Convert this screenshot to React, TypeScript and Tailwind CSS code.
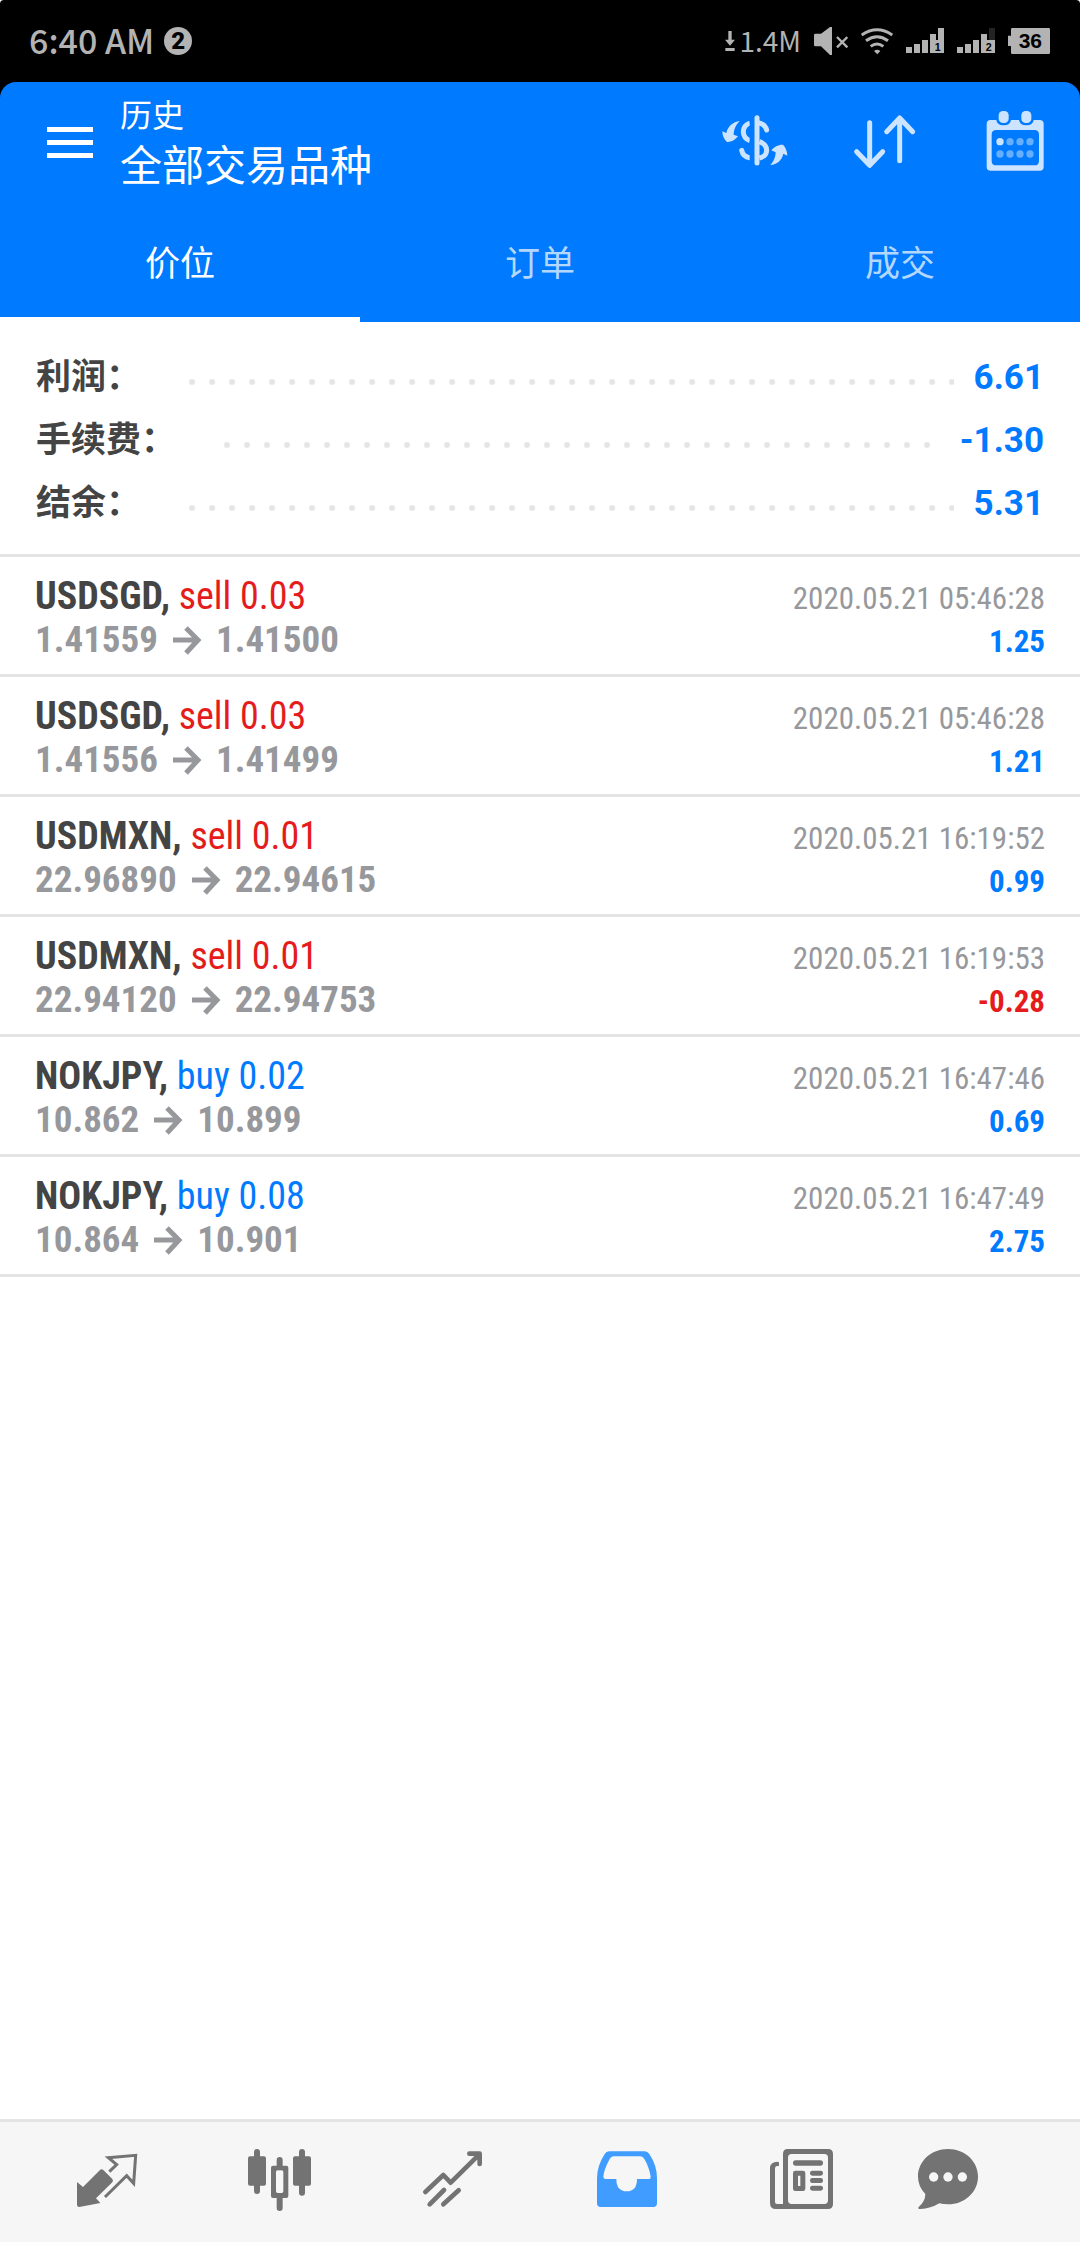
import type { ReactNode } from "react";

type Trade = {
  symbol: string;
  side: "buy" | "sell";
  volume: string;
  open: string;
  close: string;
  time: string;
  profit: string;
};

const trades: Trade[] = [
  { symbol: "USDSGD", side: "sell", volume: "0.03", open: "1.41559", close: "1.41500", time: "2020.05.21 05:46:28", profit: "1.25" },
  { symbol: "USDSGD", side: "sell", volume: "0.03", open: "1.41556", close: "1.41499", time: "2020.05.21 05:46:28", profit: "1.21" },
  { symbol: "USDMXN", side: "sell", volume: "0.01", open: "22.96890", close: "22.94615", time: "2020.05.21 16:19:52", profit: "0.99" },
  { symbol: "USDMXN", side: "sell", volume: "0.01", open: "22.94120", close: "22.94753", time: "2020.05.21 16:19:53", profit: "-0.28" },
  { symbol: "NOKJPY", side: "buy", volume: "0.02", open: "10.862", close: "10.899", time: "2020.05.21 16:47:46", profit: "0.69" },
  { symbol: "NOKJPY", side: "buy", volume: "0.08", open: "10.864", close: "10.901", time: "2020.05.21 16:47:49", profit: "2.75" },
];

const summary = [
  { label: "利润：", value: "6.61" },
  { label: "手续费：", value: "-1.30" },
  { label: "结余：", value: "5.31" },
];

const tabs = ["价位", "订单", "成交"];

function Signal({ digit, weak }: { digit: string; weak?: boolean }) {
  return (
    <svg className="h-7 w-[38px]" viewBox="678 81 114 84" fill="#b3b3b3" aria-hidden="true">
      <path d="M678 141h18v18h-18zM702 132h18v27h-18zM726 120h18v39h-18zM750 102h18v57h-18z" />
      <path d="M774 84h18v36h-18z" opacity={weak ? 0.2 : 1} />
      <path d="M764 120h28v39h-28z" />
      <text x="773" y="154" textAnchor="middle" className="fill-black font-['Liberation_Sans'] text-[32px] font-bold">
        {digit}
      </text>
    </svg>
  );
}

function StatusBar() {
  return (
    <div className="flex h-[82px] items-center justify-between rounded-t-sm bg-black pr-[30px] pl-[29px] font-['Noto_Sans_CJK_SC',sans-serif] text-[#b3b3b3]">
      <div className="flex items-center gap-[10px]">
        <span className="pb-[2px] text-[34px] leading-10 font-medium">6:40 AM</span>
        <span className="flex size-7 items-center justify-center rounded-full bg-[#b3b3b3] font-[Roboto,sans-serif] text-2xl leading-7 font-black text-black">
          2
        </span>
      </div>
      <div className="flex items-center gap-[13px]">
        <div className="flex items-center gap-1">
          <svg className="h-5 w-[10px]" viewBox="132 96 30 60" fill="#b3b3b3" aria-hidden="true">
            <path d="M142 96h10v26h10l-15 18-15-18h10zM133 147h28v9h-28z" />
          </svg>
          <span className="pb-[2px] text-[28px] leading-8">1.4M</span>
        </div>
        <svg className="h-7 w-[34px]" viewBox="399 81 102 84" aria-hidden="true">
          <path d="M399 105q0-4 4-4h17l27-20h6v84h-6l-27-26h-17q-4 0-4-4z" fill="#b3b3b3" />
          <path d="M468 111l31 31M499 111l-31 31" stroke="#b3b3b3" strokeWidth="7" fill="none" />
        </svg>
        <svg className="h-7 w-8" viewBox="541 81 96 84" fill="none" stroke="#b3b3b3" strokeWidth="9" aria-hidden="true">
          <path d="M543 105q46-31 92 0M556 122q33-24 66 0M570 139q19-14 38 0" />
          <path d="M580 153q9-7 19 0l-9 10z" fill="#b3b3b3" stroke="none" />
        </svg>
        <Signal digit="1" />
        <Signal digit="2" weak />
        <svg className="h-[26px] w-[42px]" viewBox="984 84 126 78" aria-hidden="true">
          <path d="M993 88q0-4 4-4h109q4 0 4 4v70q0 4-4 4h-109q-4 0-4-4v-20h-9v-31h9z" fill="#b3b3b3" />
          <text x="1051" y="144" textAnchor="middle" className="fill-black font-['Liberation_Sans'] text-[63px] font-bold">
            36
          </text>
        </svg>
      </div>
    </div>
  );
}

function HeaderButton({ label, viewBox, children }: { label: string; viewBox: string; children: ReactNode }) {
  return (
    <button type="button" aria-label={label} className="text-[#cce4ff]">
      <svg className="size-[66px]" viewBox={viewBox} fill="none" stroke="currentColor" strokeLinecap="round" strokeLinejoin="round">
        {children}
      </svg>
    </button>
  );
}

function Header() {
  return (
    <header className="bg-black">
      <div className="rounded-t-2xl bg-[#007aff] text-white">
        <div className="flex h-[120px] items-center pr-8 pl-[47px]">
          <button type="button" aria-label="菜单" className="flex w-[46px] flex-col gap-2">
            <span className="h-[5px] bg-white" />
            <span className="h-[5px] bg-white" />
            <span className="h-[5px] bg-white" />
          </button>
          <div className="ml-[27px] flex-1 pt-[7px]">
            <p className="text-[32px] leading-[42px]">历史</p>
            <h1 className="text-[42px] leading-[60px]">全部交易品种</h1>
          </div>
          <div className="flex gap-16">
            <HeaderButton label="货币" viewBox="127 327 198 198">
              <g fill="currentColor" stroke="none">
                <path d="M180 363C160 366 144 379 140 399L128 394C128 408 134 419 142 426C154 427 167 420 175 409L162 404C162 389 169 374 180 363Z" />
                <path d="M272 495C292 493 307 481 311 461L323 467C323 453 317 441 310 434C297 433 283 440 275 451L288 457C288 471 282 485 272 495Z" />
              </g>
              <path d="M238 369Q256 373 261 390M186 451Q190 471 210 473" strokeWidth="15" />
              <path d="M211 369Q191 376 191 395T211 422M239 425Q261 433 261 451T239 474" strokeWidth="15" strokeLinecap="butt" />
              <path d="M217 355v130" stroke="#007aff" strokeWidth="14" strokeLinecap="butt" />
              <path d="M232 353V489" strokeWidth="15" />
            </HeaderButton>
            <HeaderButton label="排序" viewBox="517 327 198 198">
              <path d="M570 368V495M531 455L570 496L609 455M660 482V354M621 395L660 354L699 395" strokeWidth="15" />
            </HeaderButton>
            <HeaderButton label="日期" viewBox="907 327 198 198">
              <g fill="currentColor" stroke="none">
                <path
                  fillRule="evenodd"
                  d="M933 360H950Q952 376 972 376T994 360H1018Q1020 376 1040 376T1062 360H1080Q1092 360 1092 372V500Q1092 512 1080 512H933Q921 512 921 500V372Q921 360 933 360ZM950 390Q936 390 936 404V482Q936 496 950 496H1064Q1078 496 1078 482V404Q1078 390 1064 390Z"
                />
                <rect x="957" y="333" width="30" height="36" rx="13" />
                <rect x="1025" y="333" width="30" height="36" rx="13" />
                <circle cx="961" cy="425" r="11" />
                <g opacity="0.5">
                  <circle cx="991" cy="425" r="11" />
                  <circle cx="1021" cy="425" r="11" />
                  <circle cx="1051" cy="425" r="11" />
                  <circle cx="961" cy="462" r="11" />
                  <circle cx="991" cy="462" r="11" />
                  <circle cx="1021" cy="462" r="11" />
                  <circle cx="1051" cy="462" r="11" />
                </g>
              </g>
            </HeaderButton>
          </div>
        </div>
        <div role="tablist" className="grid h-[120px] grid-cols-3">
          {tabs.map((tab, i) => (
            <button
              key={tab}
              type="button"
              role="tab"
              aria-selected={i === 0}
              className={
                i === 0
                  ? "border-y-[5px] border-t-transparent border-b-white pt-[6px] text-[35px] text-white"
                  : "border-y-[5px] border-transparent pt-[6px] text-[35px] text-[#b3d7ff]"
              }
            >
              {tab}
            </button>
          ))}
        </div>
      </div>
    </header>
  );
}

function Summary() {
  return (
    <dl className="border-b-[3px] border-[#e4e4e4] px-9 pt-[25px] pb-[18px] text-[35px] font-bold">
      {summary.map((row) => (
        <div key={row.label} className="flex h-[63px] items-center">
          <dt className="text-[#444444]">{row.label}</dt>
          <dd className="flex flex-1 items-center text-[#007aff]">
            <span className="mt-[6px] mr-5 ml-12 h-[6px] flex-1 bg-[radial-gradient(circle_at_3px_3px,#e4e4e4_2px,transparent_4px)] bg-[length:20px_6px]" />
            {row.value}
          </dd>
        </div>
      ))}
    </dl>
  );
}

function TradeRow({ trade }: { trade: Trade }) {
  return (
    <li className="flex h-[120px] items-baseline justify-between border-b-[3px] border-[#e4e4e4] px-[35px] pt-[18px] font-['Roboto_Condensed',Roboto,sans-serif] leading-[43px] whitespace-nowrap">
      <div className="text-[38px] leading-[43px]">
        <p className="font-bold text-[#444444]">
          {trade.symbol},{" "}
          <span className={trade.side === "sell" ? "font-normal text-[#e51c1c]" : "font-normal text-[#007aff]"}>
            {trade.side} {trade.volume}
          </span>
        </p>
        <p className="flex items-center text-[37px] leading-[43px] font-bold text-[#97989c]">
          {trade.open}
          <svg className="mx-[14px] size-[30px]" viewBox="0 0 30 30" fill="none" stroke="currentColor" strokeWidth="5" aria-label="至">
            <path d="M1 15H27M14 3L26 15L14 28" />
          </svg>
          {trade.close}
        </p>
      </div>
      <div className="text-right text-[31px] leading-[43px]">
        <p className="text-[#97989c]">{trade.time}</p>
        <p className={trade.profit.startsWith("-") ? "font-bold text-[#e51c1c]" : "font-bold text-[#007aff]"}>{trade.profit}</p>
      </div>
    </li>
  );
}

function NavButton({ label, viewBox, active, last, children }: { label: string; viewBox: string; active?: boolean; last?: boolean; children: ReactNode }) {
  return (
    <button
      type="button"
      aria-label={label}
      className={`flex items-center justify-center ${last ? "flex-2" : "flex-3"} ${active ? "text-[#409cff]" : "text-[#737373]"}`}
    >
      <svg className="size-[66px]" viewBox={viewBox} fill="currentColor">
        {children}
      </svg>
    </button>
  );
}

function BottomNav() {
  return (
    <nav className="flex h-[123px] border-t-[3px] border-[#e4e4e4] bg-[#f6f6f6] pr-[74px] pl-5">
      <NavButton label="行情" viewBox="102 117 198 198">
        <path d="M111 216L129 231L180 180Q185 175 190 180L217 207Q221 212 217 217L168 265L181 279L118 291Q111 291 111 284Z" />
        <path d="M208 185L230 164L205 143L287 136L281 220L260 197L195 261" fill="none" stroke="currentColor" strokeWidth="9" />
      </NavButton>
      <NavButton label="图表" viewBox="624 117 198 198">
        <rect x="624" y="139" width="54" height="88" rx="6" />
        <rect x="642" y="117" width="18" height="135" rx="9" />
        <rect x="759" y="139" width="54" height="88" rx="6" />
        <rect x="777" y="117" width="18" height="140" rx="9" />
        <rect x="710" y="141" width="18" height="40" rx="9" />
        <rect x="710" y="250" width="18" height="53" rx="9" />
        <path fillRule="evenodd" d="M699 167H739Q745 167 745 173V258Q745 264 739 264H699Q693 264 693 258V173Q693 167 699 167ZM713 181Q708 181 708 186V244Q708 249 713 249H725Q730 249 730 244V186Q730 181 725 181Z" />
      </NavButton>
      <NavButton label="交易" viewBox="96 117 198 198">
        <g fill="none" stroke="currentColor" strokeWidth="14" strokeLinecap="round" strokeLinejoin="round">
          <path d="M106 246L160 195L182 218L268 133M238 131H269V162" />
          <path d="M119 283L162 240M160 283L206 241" />
        </g>
      </NavButton>
      <NavButton label="历史" viewBox="618 117 198 198" active>
        <path
          fillRule="evenodd"
          d="M657 124H764Q773 124 778 132Q801 166 801 205V280Q801 291 790 291H632Q621 291 621 280V205Q621 168 644 132Q649 124 657 124ZM671 139Q663 139 659 147Q642 178 640 200Q640 207 647 207H679Q679 244 710 244T741 207H777Q783 207 782 200Q777 170 763 147Q759 139 751 139Z"
        />
      </NavButton>
      <NavButton label="新闻" viewBox="90 117 198 198">
        <path
          fillRule="evenodd"
          d="M143 117H264Q279 117 279 132V282Q279 297 264 297H108Q90 297 90 279V175Q90 155 113 155Q117 155 117 159V168H111Q105 169 105 175V276Q105 282 111 282H129V132Q129 117 143 117ZM155 132Q144 132 144 143V271Q144 282 155 282H253Q264 282 264 271V143Q264 132 253 132Z"
        />
        <rect x="159" y="151" width="90" height="16" rx="8" />
        <path fillRule="evenodd" d="M166 182H189Q196 182 196 189V236Q196 243 189 243H166Q159 243 159 236V189Q159 182 166 182ZM174 197V228H181V197Z" />
        <rect x="210" y="182" width="39" height="15" rx="7" />
        <rect x="210" y="204" width="39" height="15" rx="7" />
        <rect x="210" y="227" width="39" height="15" rx="7" />
      </NavButton>
      <NavButton label="消息" viewBox="525 117 198 198" last>
        <path d="M624 117C675 117 714 154 714 200S674 283 624 283Q610 283 598 280Q572 296 541 297Q532 297 536 291Q556 274 556 252Q534 229 534 200C534 154 573 117 624 117Z" />
        <g className="fill-[#f6f6f6]">
          <circle cx="581" cy="201" r="14" />
          <circle cx="624" cy="201" r="14" />
          <circle cx="667" cy="201" r="14" />
        </g>
      </NavButton>
    </nav>
  );
}

export default function App() {
  return (
    <div className="flex min-h-screen flex-col bg-white font-[Roboto,'Noto_Sans_CJK_SC',sans-serif]">
      <StatusBar />
      <Header />
      <main className="flex-1">
        <Summary />
        <ul>
          {trades.map((trade, i) => (
            <TradeRow key={i} trade={trade} />
          ))}
        </ul>
      </main>
      <BottomNav />
    </div>
  );
}
